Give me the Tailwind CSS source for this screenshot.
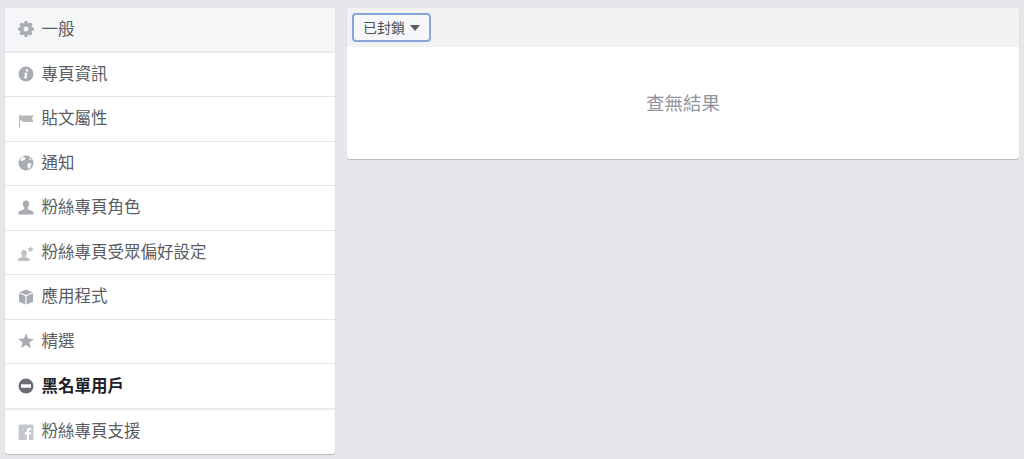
<!DOCTYPE html>
<html lang="zh-Hant">
<head>
    <meta charset="UTF-8">
    <meta name="viewport" content="width=device-width, initial-scale=1.0">
    <title>封鎖名單</title>
    <script src="https://cdn.jsdelivr.net/npm/@tailwindcss/browser@4"></script>
</head>
<body class="bg-[#e6e7eb] h-[459px] overflow-hidden font-['Liberation_Sans','Noto_Sans_CJK_TC',sans-serif]">
    <div class="flex items-start gap-3 pt-2 pl-[5px] pr-[5px]">

        <!-- Sidebar -->
        <ul class="w-[330px] h-[446px] shrink-0 flex flex-col bg-white rounded-[3px] shadow-[0_1px_1px_rgba(0,0,0,0.2)] text-[16.5px] text-[#5a5d63]">
            <li class="h-[44.5px] flex items-center gap-2 pl-3 bg-[#f5f6f7] border-b-2 border-[#e9eaed]">
                <svg class="w-4 h-4 ml-[0.5px] shrink-0" viewBox="0 0 16 16"><path fill="#a9acb2" fill-rule="evenodd" d="M6.7 0h2.600l.4 2.100 1.200.5 1.800-1.200 1.900 1.900-1.200 1.800.5 1.200 2.100.4v2.600l-2.100.4-.5 1.200 1.200 1.800-1.900 1.900-1.800-1.200-1.200.5-.4 2.100H6.700l-.4-2.100-1.200-.5-1.800 1.200-1.900-1.900 1.200-1.800-.5-1.200L0 9.300V6.700l2.100-.4.5-1.200-1.200-1.800 1.900-1.900 1.800 1.200 1.200-.5zM8 5.500a2.500 2.500 0 1 0 0 5 2.500 2.500 0 0 0 0-5z"/></svg>
                <span>一般</span>
            </li>
            <li class="h-[44.5px] flex items-center gap-2 pl-3 border-b border-[#e4e5e8]">
                <svg class="w-4 h-4 ml-[0.5px] shrink-0" viewBox="0 0 16 16"><circle cx="8" cy="8" r="7.500" fill="#a9acb2"/><circle cx="9" cy="4.400" r="1.200" fill="#fff"/><path fill="#fff" d="M6.500 6.800h2.900l-1 4.400h.9l-.2 1H6.100l1-4.400h-.8z"/></svg>
                <span>專頁資訊</span>
            </li>
            <li class="h-[44.5px] flex items-center gap-2 pl-3 border-b border-[#e4e5e8]">
                <svg class="w-4 h-4 ml-[0.5px] mt-1 shrink-0" viewBox="0 0 16 16"><path fill="#b4b7bc" d="M1 2h1v13H1z"/><path fill="#b4b7bc" d="M2 2.500h13.500l-1.500 3 1.500 3.500H4.500V7.500H2z"/></svg>
                <span>貼文屬性</span>
            </li>
            <li class="h-[44.5px] flex items-center gap-2 pl-3 border-b border-[#e4e5e8]">
                <svg class="w-4 h-4 ml-[0.5px] shrink-0" viewBox="0 0 16 16"><circle cx="8" cy="8" r="7.500" fill="#a9acb2"/><path fill="#fff" d="M5 1.500 7.500 3 6.500 5 4 6 2.200 5.200C2.800 3.600 3.800 2.300 5 1.500zM10 8l3.500.5-1 3.500-2 2.300-1.200-3zM11 2.200l2.500 2.500-1.700.3z"/></svg>
                <span>通知</span>
            </li>
            <li class="h-[44.5px] flex items-center gap-2 pl-3 border-b border-[#e4e5e8]">
                <svg class="w-4 h-4 ml-[0.5px] shrink-0" viewBox="0 0 16 16"><path fill="#a9acb2" d="M8 .5c2 0 3.200 1.400 3.200 3.500 0 1.500-.6 2.800-1.400 3.500v1.700l4.400 1.800c.9.400 1.300 1 1.300 2v1.500H.500V13c0-1 .4-1.600 1.300-2l4.400-1.800V7.500C5.400 6.800 4.800 5.500 4.800 4 4.800 1.900 6 .5 8 .5z"/></svg>
                <span>粉絲專頁角色</span>
            </li>
            <li class="h-[44.5px] flex items-center gap-2 pl-3 border-b border-[#e4e5e8]">
                <svg class="w-4 h-4 ml-[0.5px] mt-1 shrink-0" viewBox="0 0 16 16"><path fill="#bcbfc4" d="M6 4c1.800 0 2.800 1.200 2.800 3 0 1.200-.5 2.200-1.200 2.800v1.200l3 1.300c.7.300 1 .8 1 1.500V15H0v-1.200c0-.7.300-1.200 1-1.500L4.400 11V9.800C3.700 9.200 3.200 8.200 3.200 7 3.200 5.200 4.200 4 6 4z"/><path fill="#bcbfc4" d="m12.500 0 .9 2.100 2.300.2-1.700 1.500.5 2.200-2-1.200-2 1.200.5-2.200-1.700-1.500 2.300-.2z"/></svg>
                <span>粉絲專頁受眾偏好設定</span>
            </li>
            <li class="h-[44.5px] flex items-center gap-2 pl-3 border-b border-[#e4e5e8]">
                <svg class="w-4 h-4 ml-[0.5px] shrink-0" viewBox="0 0 16 16"><path fill="#a9acb2" d="M8 .5l6.500 2.700L8 5.900 1.500 3.200zM1 4.300l6.400 2.700v8.500L1 12.800zM15 4.300v8.500l-6.400 2.700V7z"/></svg>
                <span>應用程式</span>
            </li>
            <li class="h-[44.5px] flex items-center gap-2 pl-3 border-b border-[#e4e5e8]">
                <svg class="w-4 h-4 ml-[0.5px] shrink-0" viewBox="0 0 16 16"><path fill="#a9acb2" d="m8 .2 2.100 5.300 5.800.4-4.500 3.600 1.500 5.700L8 12.100l-4.900 3.100 1.500-5.700L.1 5.900l5.800-.4z"/></svg>
                <span>精選</span>
            </li>
            <li class="h-[45.5px] pt-[1px] flex items-center gap-2 pl-3 border-b-2 border-[#e9eaed]">
                <svg class="w-4 h-4 ml-[0.5px] shrink-0" viewBox="0 0 16 16"><circle cx="8" cy="8" r="7.500" fill="#6b6e74"/><rect x="3" y="6.300" width="10" height="3.400" fill="#fff"/></svg>
                <span class="font-bold text-[#1d2129]">黑名單用戶</span>
            </li>
            <li class="flex-1 flex items-center gap-2 pl-3">
                <svg class="w-4 h-4 ml-[0.5px] shrink-0" viewBox="0 0 16 16"><rect x="0.500" y="0.500" width="15" height="15.500" rx="1.500" fill="#c4c7cb"/><path fill="#fff" d="M11 16v-5.600h1.900l.3-2.200H11V6.900c0-.6.200-1 1.100-1h1.100V3.900c-.2 0-.9-.1-1.600-.1-1.700 0-2.800 1-2.800 2.800v1.600H6.900v2.200h1.900V16z"/></svg>
                <span>粉絲專頁支援</span>
            </li>
        </ul>

        <!-- Main panel -->
        <div class="flex-1 h-[151px] bg-white rounded-[3px] shadow-[0_1px_1px_rgba(0,0,0,0.2)] overflow-hidden">
            <div class="h-[39px] bg-[#f2f2f2] flex items-center pl-[5px]">
                <button class="h-[29px] w-[79px] flex items-center justify-center gap-[5px] bg-[#f6f7f9] border-2 border-[#8aa5d8] rounded-[4px] text-sm text-[#4b4f56]">
                    <span>已封鎖</span>
                    <svg class="w-[10px] h-[6px]" viewBox="0 0 10 6"><path fill="#5a5d63" d="M0 0h10L5 6z"/></svg>
                </button>
            </div>
            <div class="h-28 pt-[2px] flex items-center justify-center text-[18.5px] text-[#90949c]">查無結果</div>
        </div>
    </div>
</body>
</html>
